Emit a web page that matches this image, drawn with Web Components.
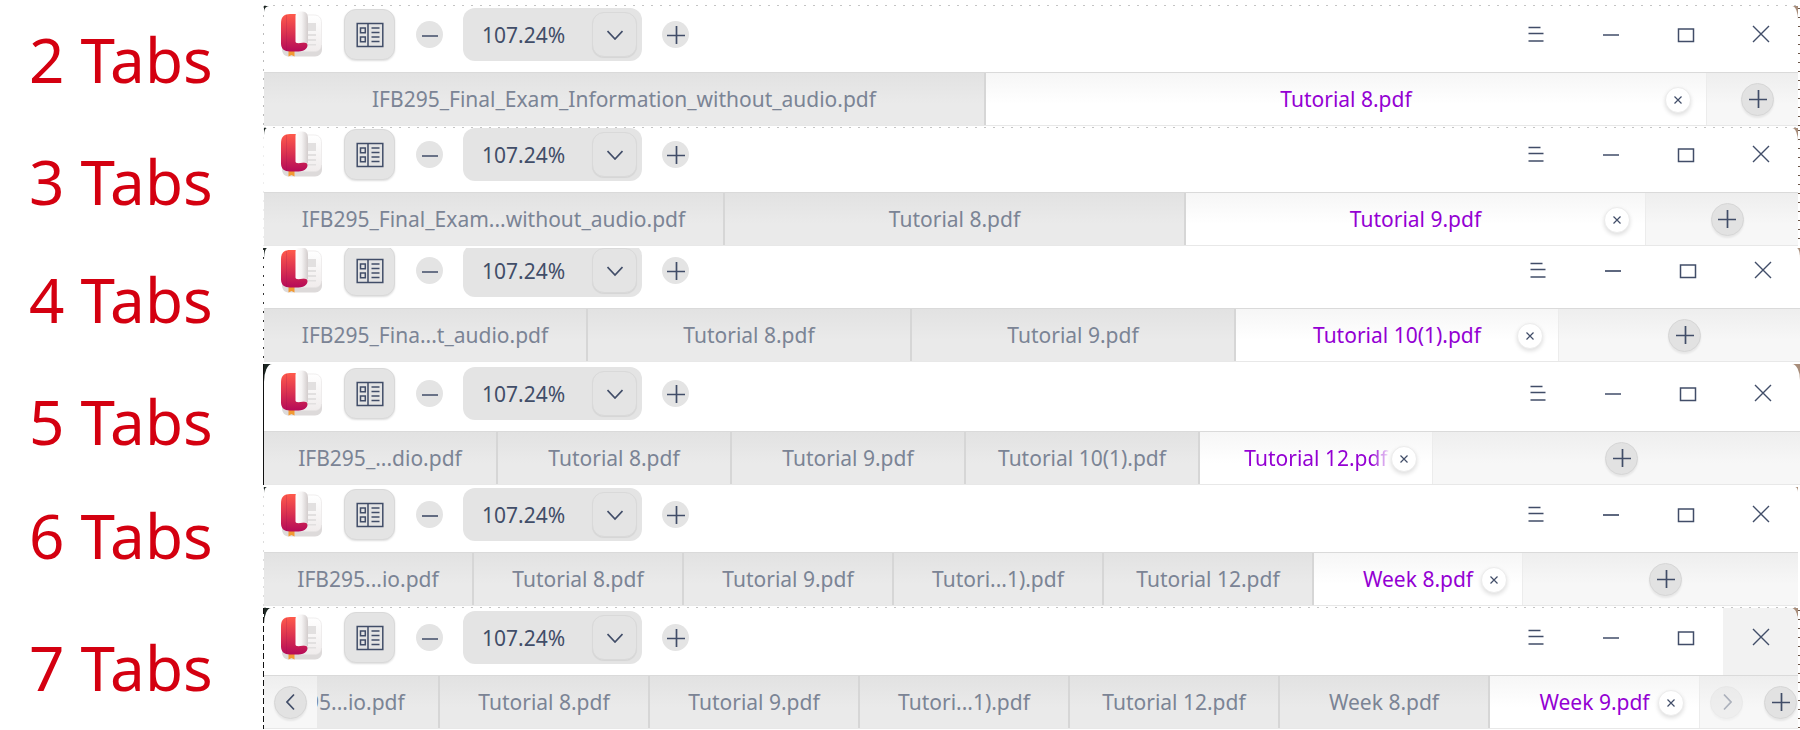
<!DOCTYPE html>
<html lang="en">
<head>
<meta charset="utf-8">
<title>Tab widths</title>
<style>
  body {
    margin: 0;
    background: #fff;
    font-family: "Noto Sans", "Open Sans", sans-serif;
  }
</style>
</head>
<body>
<tab-comparison></tab-comparison>

<script>
// icons, all stroked with currentColor
const ICONS = {
  sidebar: '<svg width="28" height="26" viewBox="0 0 28 26" fill="none" stroke="currentColor"><g stroke-width="1.5"><path d="M1.2 1.500h25.600v23H1.200zM12 1.500v23"/><path d="M4.500 6h4.800v4.800H4.500zM4.500 15h4.800v4.800H4.500z"/><path d="M15.500 6h8M15.500 10.600h8M15.500 15h8M15.500 19.600h8"/></g></svg>',
  minus: '<svg width="16" height="16" viewBox="0 0 16 16" fill="none" stroke="currentColor" stroke-width="1.6"><path d="M0 9h16"/></svg>',
  plus: '<svg width="18" height="18" viewBox="0 0 18 18" fill="none" stroke="currentColor" stroke-width="1.7"><path d="M0 9.500h18M9.500 0v18"/></svg>',
  down: '<svg width="16" height="12" viewBox="0 0 16 12" fill="none" stroke="currentColor" stroke-width="1.7"><path d="M.5 2l7.500 8 7.500-8"/></svg>',
  left: '<svg width="10" height="18" viewBox="0 0 10 18" fill="none" stroke="currentColor" stroke-width="1.7"><path d="M8 1.500L1 9l7 7.500"/></svg>',
  right: '<svg width="10" height="18" viewBox="0 0 10 18" fill="none" stroke="currentColor" stroke-width="1.7"><path d="M2 1.500L9 9l-7 7.500"/></svg>',
  menu: '<svg width="18" height="18" viewBox="0 0 18 18" fill="none" stroke="currentColor" stroke-width="1.5"><path d="M1.500 2.500h12M1.500 8.500h15M1.500 16h15"/></svg>',
  minimize: '<svg width="18" height="18" viewBox="0 0 18 18" fill="none" stroke="currentColor" stroke-width="1.7"><path d="M1 10h16"/></svg>',
  maximize: '<svg width="18" height="18" viewBox="0 0 18 18" fill="none" stroke="currentColor" stroke-width="1.5"><path d="M1.500 4h15v12.500h-15z"/></svg>',
  close: '<svg width="18" height="18" viewBox="0 0 18 18" fill="none" stroke="currentColor" stroke-width="1.4"><path d="M1 1l16 16M17 1L1 17"/></svg>',
  x: '<svg width="8" height="8" viewBox="0 0 8 8" fill="none" stroke="currentColor" stroke-width="1.200"><path d="M.5.5l7 7M7.500.5l-7 7"/></svg>',
}

const icon = (name) => ICONS[name]

// book logo of the reader
class AppLogo extends HTMLElement {
  connectedCallback() {
    this.attachShadow({ mode: 'open' }).innerHTML = `
      <style>
        :host { display: block; width: 42px; height: 48px; }
        svg { display: block; }
      </style>
      <svg width="42" height="48" viewBox="0 0 42 48" aria-hidden="true">
        <defs>
          <linearGradient id="cover" x1="0" y1="0" x2="0" y2="1">
            <stop offset="0" stop-color="#ff5a4b"/><stop offset=".5" stop-color="#dc3350"/><stop offset="1" stop-color="#b50a58"/>
          </linearGradient>
          <linearGradient id="roll" x1="0" y1="0" x2="1" y2="0">
            <stop offset="0" stop-color="#fff"/><stop offset=".5" stop-color="#f5f3f3"/><stop offset="1" stop-color="#d2cccc"/>
          </linearGradient>
          <linearGradient id="paper" x1="0" y1="0" x2="0" y2="1">
            <stop offset="0" stop-color="#fff"/><stop offset="1" stop-color="#f0ecec"/>
          </linearGradient>
        </defs>
        <path d="M1 34v4c0 5 3 7.500 7 7.500h26c4 0 7-3 7-7V34z" fill="#dddada"/>
        <path d="M20 4h13c5 0 7.500 3 7.500 8v21c0 5-2.500 7.500-7.500 7.500H20z" fill="url(#paper)" stroke="#e6e3e3" stroke-width=".6"/>
        <path d="M26 12h9v8h-9zM26 23h9v2h-9zM26 28h9v2h-9zM26 33h9v1.500h-9z" fill="#e2e0e0"/>
        <path d="M7.500 39H13.500v6.500l-3-1.500-3 1.500z" fill="#f29a33"/>
        <path d="M0 12c0-6 3-9 9-9h6.500v28.500H21c4-.5 5.500.5 5.500 3 0 3-4 6-9 6H9c-6 0-9-3-9-8z" fill="url(#cover)"/>
        <path d="M5.500 4v35.500" stroke="#8d1450" stroke-opacity=".2" fill="none"/>
        <path d="M14.500 5c0-3 1.500-4.500 4.500-4.500h2.500c4 0 5.500 3 5.500 7V33c-1-1.800-3-2-5.500-1.500-3 .8-7 1.200-7-1z" fill="url(#roll)"/>
      </svg>`
  }
}

class IconButton extends HTMLElement {
  connectedCallback() {
    const off = this.hasAttribute('disabled') ? 'disabled' : ''
    this.attachShadow({ mode: 'open' }).innerHTML = `
      <style>
        :host { display: block; flex: none; width: 27px; height: 27px; }
        button {
          display: flex; align-items: center; justify-content: center;
          box-sizing: border-box; width: 100%; height: 100%; padding: 0;
          border: 0; border-radius: 50%; background: #e4e4e4; color: #414d68;
        }
        svg { display: block; flex: none; }
        :host([kind="square"]) { width: 51px; height: 51px; }
        :host([kind="square"]) button { border: 1px solid #d9d9d9; border-radius: 12px; box-shadow: 0 1px 2px #0002; }
        :host([kind="drop"]) { width: 45px; height: 45px; }
        :host([kind="drop"]) button { border: 1px solid #d9d9d9; border-radius: 12px; box-shadow: 0 1px 1px #0001; }
        :host([kind="round"]) { width: 33px; height: 33px; }
        :host([kind="round"]) button { border: 1px solid #d6d6d6; background: #e2e2e2; box-shadow: 0 2px 2px #0001; }
        :host([kind="close"]) { width: 26px; height: 26px; }
        :host([kind="close"]) button { border: 1px solid #ececec; background: #fff; box-shadow: 0 2px 4px #0002; }
        :host([kind="frame"]) { width: 75px; height: 100%; }
        :host([kind="frame"]) button { border-radius: 0; background: none; }
        :host([kind="frame"][hover]) button { background: #f2f2f2; }
        button:disabled { opacity: .4; }
      </style>
      <button type="button" aria-label="${this.getAttribute('label')}" ${off}>${icon(this.getAttribute('icon'))}</button>`
  }
}

class TitleBar extends HTMLElement {
  connectedCallback() {
    const hover = this.hasAttribute('hover-close') ? 'hover' : ''
    this.attachShadow({ mode: 'open' }).innerHTML = `
      <style>
        :host {
          display: flex; align-items: flex-end; justify-content: space-between;
          box-sizing: border-box; overflow: hidden; background: #fff; color: #414d68;
        }
        .tools { display: flex; align-items: center; height: 75px; padding-left: 17px; flex: none; }
        .side { margin: 0 21px; }
        .zoom {
          display: flex; align-items: center; justify-content: space-between;
          box-sizing: border-box; width: 179px; height: 53px; margin: 0 20px;
          padding: 0 5px 0 19px; border-radius: 12px; background: #e4e4e4;
        }
        .value { font-size: 21px; line-height: 30px; }
        .frame { display: flex; height: 76px; flex: none; }
      </style>
      <div class="tools">
        <app-logo></app-logo>
        <icon-button class="side" kind="square" icon="sidebar" label="Thumbnails"></icon-button>
        <icon-button icon="minus" label="Zoom out"></icon-button>
        <div class="zoom">
          <span class="value">107.24%</span>
          <icon-button kind="drop" icon="down" label="Zoom level"></icon-button>
        </div>
        <icon-button icon="plus" label="Zoom in"></icon-button>
      </div>
      <div class="frame">
        <icon-button kind="frame" icon="menu" label="Menu"></icon-button>
        <icon-button kind="frame" icon="minimize" label="Minimize"></icon-button>
        <icon-button kind="frame" icon="maximize" label="Maximize"></icon-button>
        <icon-button kind="frame" icon="close" label="Close" ${hover}></icon-button>
      </div>`
  }
}

class DocTab extends HTMLElement {
  connectedCallback() {
    const active = this.hasAttribute('active')
    this.attachShadow({ mode: 'open' }).innerHTML = `
      <style>
        :host {
          display: block; position: relative; box-sizing: border-box; min-width: 0;
          border-right: 2px solid #d6d6d6;
          background: linear-gradient(#e2e2e2, #eaeaea 60%);
          color: #7b8495;
        }
        :host([active]) { border-right: 1px solid #ececec; background: linear-gradient(#f6f6f6, #fff 60%); color: #9400d3; }
        .tab {
          display: block; width: 100%; height: 100%; padding: 0; border: 0; background: none;
          color: inherit; font: inherit; font-size: 21px; line-height: 30px;
          white-space: nowrap; overflow: hidden;
        }
        icon-button { position: absolute; right: 15px; top: 14px; }
        :host([fade]) .tab {
          mask-image: linear-gradient(90deg, #000 calc(100% - 60px), transparent calc(100% - 42px));
        }
      </style>
      <button class="tab" type="button" role="tab" aria-selected="${active}"><slot></slot></button>
      ${active ? '<icon-button kind="close" icon="x" label="Close tab"></icon-button>' : ''}`
  }
}

class TabStrip extends HTMLElement {
  connectedCallback() {
    const scroll = this.hasAttribute('scroll')
    this.attachShadow({ mode: 'open' }).innerHTML = `
      <style>
        :host {
          display: flex; box-sizing: border-box; height: 54px;
          border-top: 1px solid #dadada; border-bottom: 1px solid #e8e8e8;
          background: linear-gradient(#eee, #f7f7f7 60%);
        }
        .list { display: flex; min-width: 0; flex: var(--tabs) 1 0; overflow: hidden; }
        ::slotted(doc-tab) { flex: 1 1 0; }
        .end { display: flex; align-items: center; justify-content: center; flex: var(--rest) 1 0; }
        .end icon-button { margin-left: 10px; }
        .back { display: none; align-items: center; justify-content: center; width: 53px; flex: none; }
        :host([scroll]) .list { flex: 1; justify-content: flex-end; }
        :host([scroll]) ::slotted(doc-tab) { flex: 0 0 210px; }
        :host([scroll]) .back { display: flex; }
        :host([scroll]) .end { flex: none; gap: 11px; padding-right: 1px; }
      </style>
      <div class="back"><icon-button kind="round" icon="left" label="Scroll left"></icon-button></div>
      <div class="list" role="tablist"><slot></slot></div>
      <div class="end">
        ${scroll ? '<icon-button kind="round" icon="right" label="Scroll right" disabled></icon-button>' : ''}
        <icon-button kind="round" icon="plus" label="New tab"></icon-button>
      </div>`
  }
}

// one cropped window; what lies behind its rounded corners shows through
class ReaderWindow extends HTMLElement {
  connectedCallback() {
    this.attachShadow({ mode: 'open' }).innerHTML = `
      <style>
        :host { display: block; position: relative; padding-right: 2px; }
        .back { background: linear-gradient(90deg, #1b2622 50%, #a88d7a 50%); }
        title-bar { height: var(--bar); border-radius: var(--corner); }
        .ants { position: absolute; pointer-events: none; }
        .top { left: 0; right: 0; top: -1px; height: 1px; background: repeating-linear-gradient(90deg, #c4c4c4 0 2px, transparent 2px 9px); }
        .left { left: -1px; top: 0; bottom: 0; width: 1px; background: repeating-linear-gradient(var(--ant) 0 2px, #fff 2px 9px); }
        .right { right: 0; top: 0; bottom: 0; width: 2px; background: repeating-linear-gradient(#fff 0 2px, #6b5648 2px 3px, #fff 3px 9px); }
        :host([edge="solid"]), :host([edge="full"]) { padding-right: 0; }
        :host([edge="solid"]) .left { background: #111; }
        :host([edge="solid"]) .right, :host([edge="full"]) .right { display: none; }
        :host([edge="solid"]) .top, :host([edge="full"]) .top, :host([edge="faint"]) .top { display: none; }
        :host([edge="dense"]) .left { background: repeating-linear-gradient(#111 0 6px, #fff 6px 9px); }
        :host([edge="faint"]) .right { display: none; }
      </style>
      <div class="back"><title-bar ${this.hasAttribute('hover-close') ? 'hover-close' : ''}></title-bar></div>
      <slot></slot>
      <div class="ants top"></div>
      <div class="ants left"></div>
      <div class="ants right"></div>`
  }
}

const ROWS = [
  { bar: 66, tabs: 1443, rest: 91, ant: '#bbb', corner: '5px 6px 0 0 / 6px 14px 0 0',
    names: ['IFB295_Final_Exam_Information_without_audio.pdf', 'Tutorial 8.pdf'] },
  { bar: 64, tabs: 1382, rest: 152, ant: '#eee', corner: '3px 6px 0 0 / 7px 14px 0 0',
    names: ['IFB295_Final_Exam...without_audio.pdf', 'Tutorial 8.pdf', 'Tutorial 9.pdf'] },
  { bar: 60, tabs: 1295, rest: 241, edge: 'full', ant: '#333', corner: '3px 3px 0 0 / 12px 10px 0 0',
    names: ['IFB295_Fina...t_audio.pdf', 'Tutorial 8.pdf', 'Tutorial 9.pdf', 'Tutorial 10(1).pdf'] },
  { bar: 67, tabs: 1169, rest: 367, edge: 'solid', fade: true, corner: '8px 8px 0 0 / 18px 16px 0 0',
    names: ['IFB295_...dio.pdf', 'Tutorial 8.pdf', 'Tutorial 9.pdf', 'Tutorial 10(1).pdf', 'Tutorial 12.pdf'] },
  { bar: 65, tabs: 1259, rest: 275, edge: 'faint', ant: '#ddd', corner: '3px 3px 0 0 / 6px 5px 0 0',
    names: ['IFB295...io.pdf', 'Tutorial 8.pdf', 'Tutorial 9.pdf', 'Tutori...1).pdf', 'Tutorial 12.pdf', 'Week 8.pdf'] },
  { bar: 67, scroll: true, edge: 'dense', corner: '7px 7px 0 0 / 16px 14px 0 0',
    names: ['IFB295...io.pdf', 'Tutorial 8.pdf', 'Tutorial 9.pdf', 'Tutori...1).pdf', 'Tutorial 12.pdf', 'Week 8.pdf', 'Week 9.pdf'] },
]

class TabComparison extends HTMLElement {
  connectedCallback() {
    this.attachShadow({ mode: 'open' }).innerHTML = `
      <style>
        :host { display: grid; grid-template-columns: 264px minmax(0, 1fr); }
        .labels { display: grid; grid-template-rows: 122px 118px 122px 114px 132px 118px; }
        .labels h2 { margin: 0; padding-left: 29px; font-size: 62px; line-height: 118px; font-weight: 400; color: #d40010; white-space: nowrap; }
        .windows { display: flex; flex-direction: column; gap: 2px; padding-top: 6px; }
      </style>
      <div class="labels">${ROWS.map((row) => `<h2>${row.names.length} Tabs</h2>`).join('')}</div>
      <div class="windows">${ROWS.map((row) => this.window(row)).join('')}</div>`
  }

  window(row) {
    const last = row.names.length - 1
    const tabs = row.names
      .map((name, i) => `<doc-tab ${i === last ? 'active' : ''} ${i === last && row.fade ? 'fade' : ''}>${name}</doc-tab>`)
      .join('')
    return `
      <reader-window edge="${row.edge || ''}" ${row.scroll ? 'hover-close' : ''}
        style="--bar: ${row.bar}px; --corner: ${row.corner}; --ant: ${row.ant}; --tabs: ${row.tabs}; --rest: ${row.rest}">
        <tab-strip ${row.scroll ? 'scroll' : ''}>${tabs}</tab-strip>
      </reader-window>`
  }
}

customElements.define('app-logo', AppLogo)
customElements.define('icon-button', IconButton)
customElements.define('title-bar', TitleBar)
customElements.define('doc-tab', DocTab)
customElements.define('tab-strip', TabStrip)
customElements.define('reader-window', ReaderWindow)
customElements.define('tab-comparison', TabComparison)
</script>
</body>
</html>
